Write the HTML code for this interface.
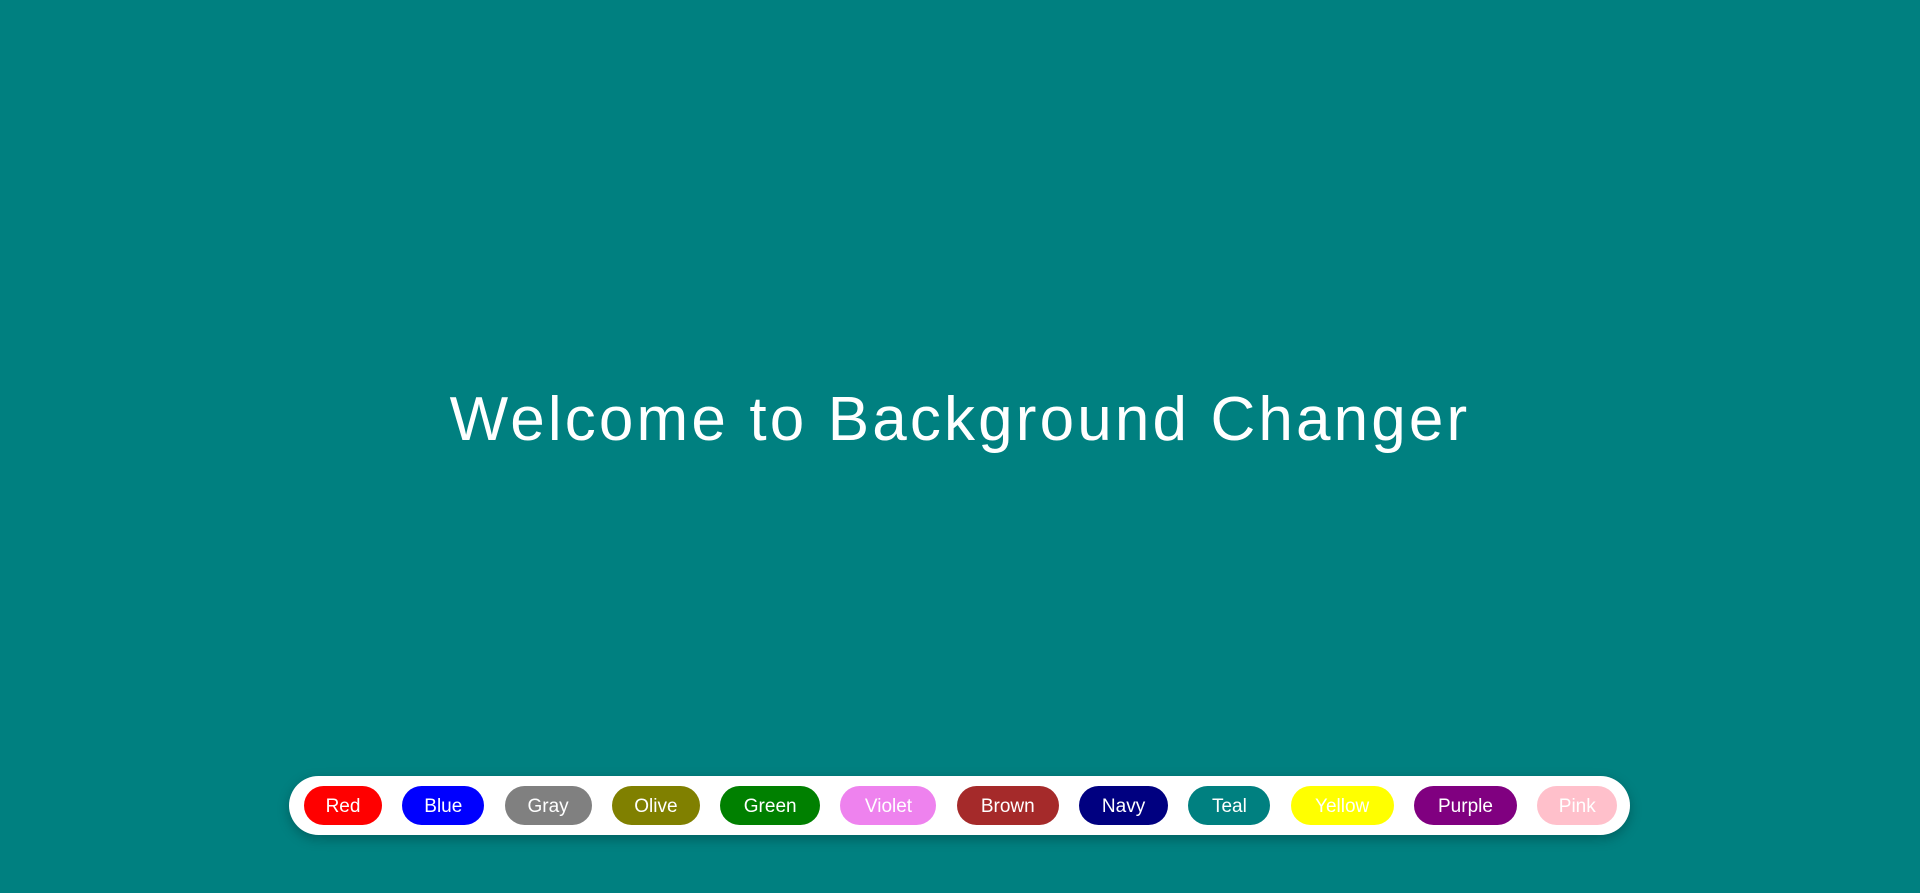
<!DOCTYPE html>
<html><head><meta charset="utf-8"><style>
html,body{margin:0;padding:0;width:1920px;height:893px;overflow:hidden;background:#008080;font-family:"Liberation Sans",sans-serif;}
h1{position:absolute;left:0;width:1920px;top:384px;margin:0;text-align:center;color:#fff;font-weight:400;font-size:62px;line-height:72px;letter-spacing:3.15px;}
.bar{position:absolute;left:289px;top:776px;width:1341px;height:59px;background:#fff;border-radius:30px;box-shadow:0 4px 12px rgba(0,0,0,0.25);box-sizing:border-box;padding:10px 15px;display:flex;gap:20.3px;align-items:center;}
.bar span{display:block;height:39px;border-radius:20px;color:#fff;font-size:19px;line-height:41px;text-align:center;flex:none;}
</style></head><body>
<h1>Welcome to Background Changer</h1>
<div class="bar">
<span style="width:78px;background:red">Red</span>
<span style="width:82px;background:blue">Blue</span>
<span style="width:87px;background:gray">Gray</span>
<span style="width:88px;background:olive">Olive</span>
<span style="width:100px;background:green">Green</span>
<span style="width:96px;background:violet">Violet</span>
<span style="width:102px;background:brown">Brown</span>
<span style="width:89px;background:navy">Navy</span>
<span style="width:82px;background:teal">Teal</span>
<span style="width:103px;background:yellow">Yellow</span>
<span style="width:103px;background:purple">Purple</span>
<span style="width:80px;background:pink">Pink</span>
</div>
</body></html>
